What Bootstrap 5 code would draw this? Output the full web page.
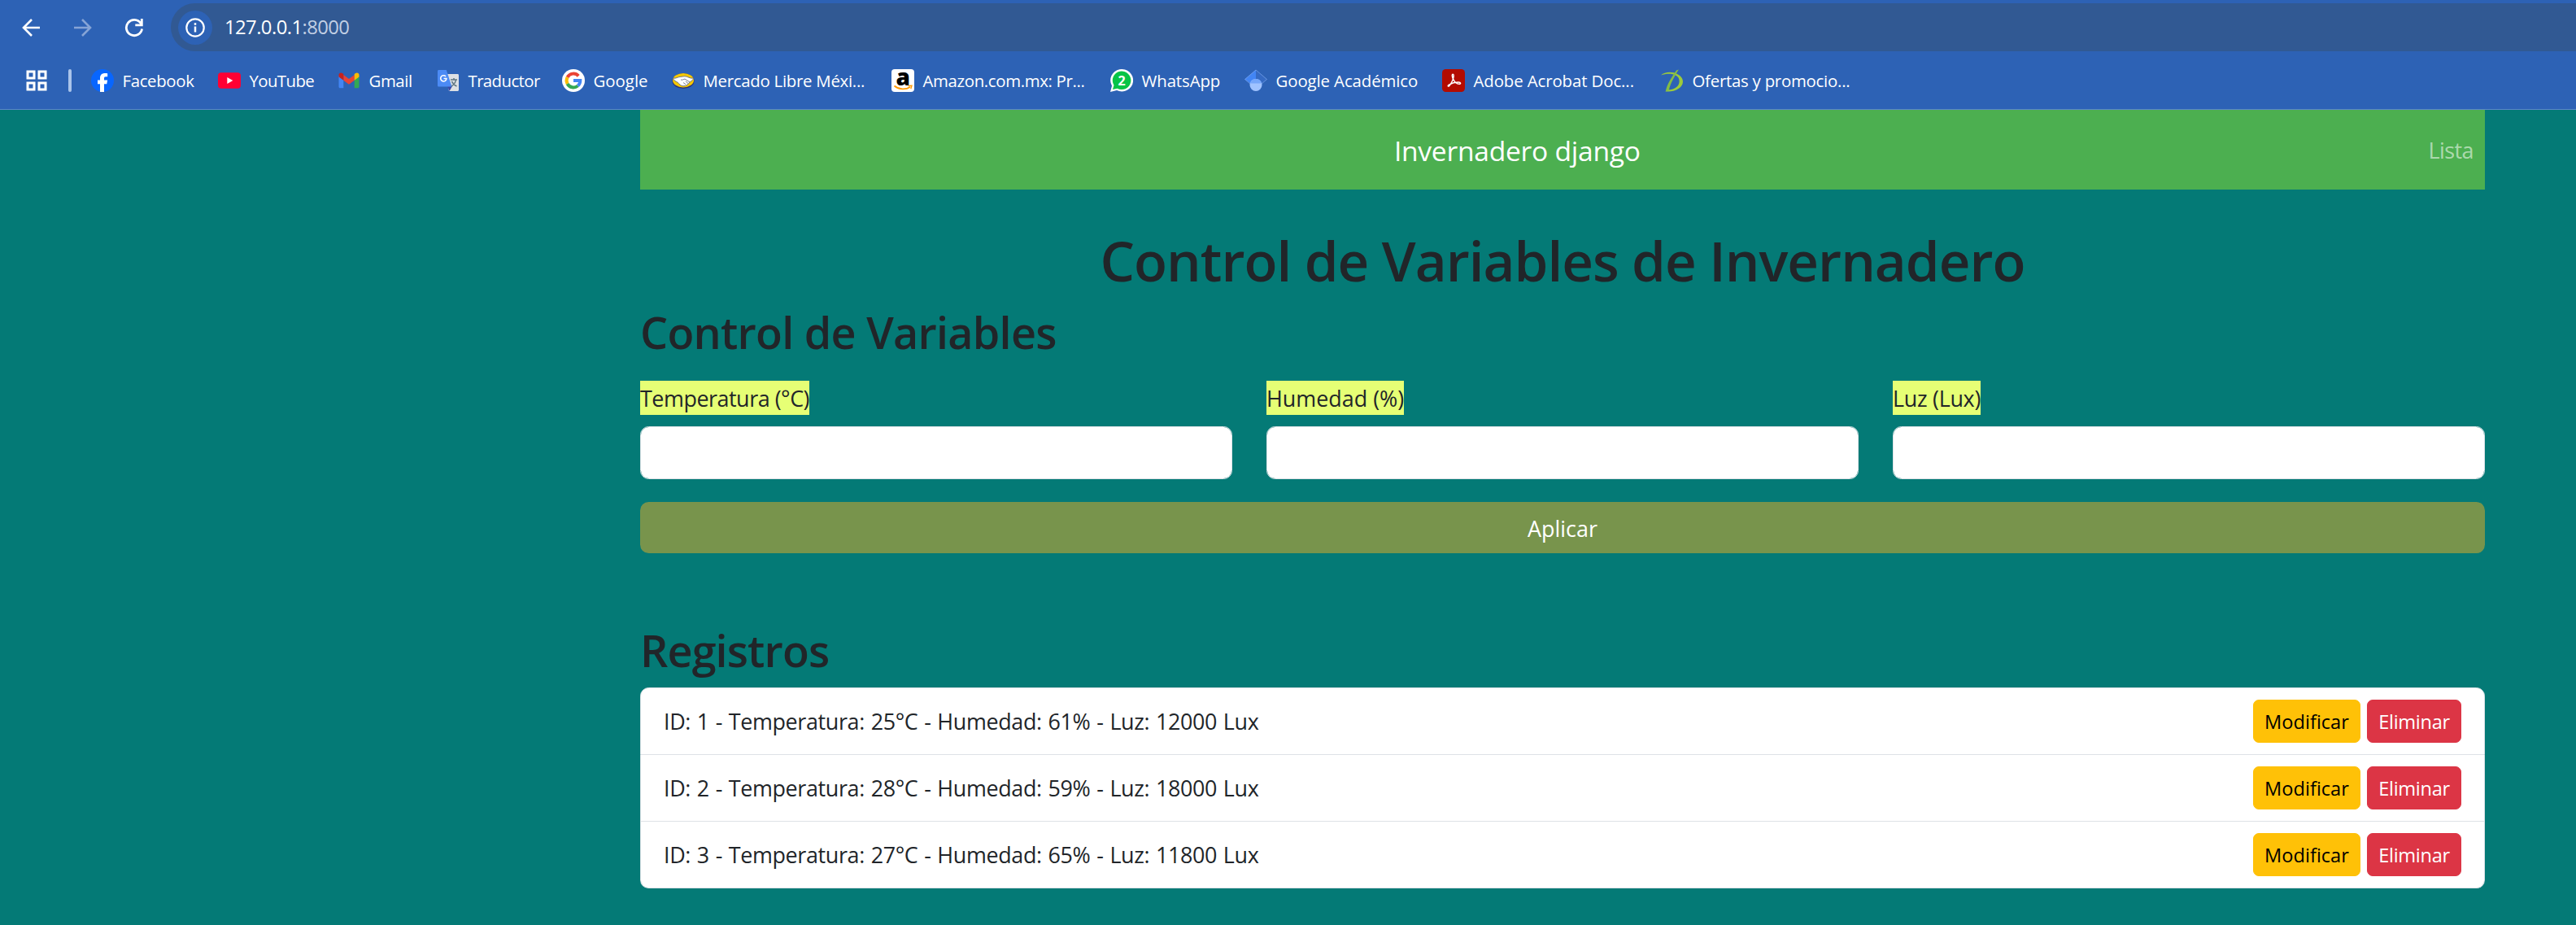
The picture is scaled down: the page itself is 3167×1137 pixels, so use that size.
<!DOCTYPE html>
<html lang="es">
<head>
<meta charset="utf-8">
<title>Invernadero django</title>
<link href="https://cdn.jsdelivr.net/npm/bootstrap@5.3.0/dist/css/bootstrap.min.css" rel="stylesheet">
<style>
html{font-size:28px;overflow:hidden}
body{--bs-body-font-family:"Open Sans","Noto Sans",sans-serif;background:#047a76;height:1137px;overflow:hidden}
.browser-top{height:135px;background:#2d62b5;border-bottom:1px solid #5d86c8;color:#fff}
.tool-row{height:67px;padding:4px 0 4px 26px}
.tool-row>svg{flex:none}
.ic-forward{margin-left:40px}
.ic-reload{margin-left:39px}
.omnibox{height:59px;background:#315993;border-radius:29.5px 0 0 29.5px;margin-left:33px;padding-left:9px;font-size:23.8px;letter-spacing:-.55px}
.site-info{width:42px;height:42px;border-radius:50%;background:#2d62b5;margin-right:15px}
.port{color:#c1cfe4}
.marks-row{height:64px;padding-left:32px;font-size:20.4px}
.divider{width:4px;height:28px;border-radius:2px;background:#aac4ea;margin:0 24px 0 26px}
.bm{flex:none;display:flex;align-items:center;white-space:nowrap}
.bm svg{width:28px;height:28px;flex:none;margin-right:10.5px;overflow:visible}
.w1{width:156px;letter-spacing:-.35px}.w2{width:147px;letter-spacing:-.6px}.w3{width:122px;letter-spacing:-.45px}.w4{width:154px;letter-spacing:-.6px}.w5{width:135px;letter-spacing:0}.w6{width:270px;letter-spacing:-.27px}.w7{width:269px;letter-spacing:-.35px}.w8{width:165px;letter-spacing:-.1px}.w9{width:243px;letter-spacing:-.1px}.w10{width:269px;letter-spacing:-.1px}.w11{letter-spacing:-.25px}
.page{width:2310px;max-width:none;margin-left:766px;padding:0 21px}
.green-nav{background:#4caf50;height:98px;padding:15px 0 13px}
.green-nav .navbar-brand{font-size:33.6px;letter-spacing:-.25px;margin-right:0;padding-right:28px}
.green-nav .nav-link{font-size:26.9px;letter-spacing:-.55px;color:rgba(255,255,255,.55);padding:7px 14px}
h1,h2{font-weight:600!important;color:#212529}
h1{font-size:67.2px!important;height:84px;line-height:78px!important;padding-top:6px;margin:42px 0 14px!important;letter-spacing:-.97px}
h2{font-size:53.8px!important;height:67.2px;line-height:63.2px!important;padding-top:4px;margin:0 0 14px!important;letter-spacing:-.7px}
h2.registros{margin-top:84px!important;letter-spacing:-.85px}
.fields{margin-top:28px;--bs-gutter-x:42px}
.form-label{background:#e6ff75;font-size:26.9px;line-height:40px;padding-top:2px;margin-bottom:14px;vertical-align:top}
.lb-temp{letter-spacing:-.47px}
.lb-luz{letter-spacing:-.28px}
.form-control{height:65px;border-radius:10.5px}
.btn-aplicar{background:#78944c;color:#fff;height:63px;border:0;border-radius:10.5px;font-size:26.9px;padding:11px 21px 9px;margin-top:28px}
.list-group{--bs-list-group-border-radius:10.5px}
.list-group-item{padding:14px 28px;font-size:26.9px;letter-spacing:-.36px;word-spacing:1.2px}
.list-group-item>span{padding-top:1.5px}
.actions{gap:8px;letter-spacing:0}
.btn-sm{font-size:23.6px;line-height:37px;height:53px;padding:8px 13px 6px;border-radius:7px}
.btn-warning{width:132px}
.btn-danger{width:116px;letter-spacing:-.3px}
</style>
<script src="https://cdn.jsdelivr.net/npm/bootstrap@5.3.0/dist/js/bootstrap.bundle.min.js"></script>
</head>
<body>
<header class="browser-top">
  <div class="tool-row d-flex align-items-center">
    <svg width="24" height="24" viewBox="0 0 24 24" fill="none" stroke="#fff" stroke-width="2.6"><path d="M23 12H3M13 2 3 12l10 10"/></svg>
    <svg class="ic-forward" width="24" height="24" viewBox="0 0 24 24" fill="none" stroke="#86a4d6" stroke-width="2.6"><path d="M1 12h20M11 2l10 10-10 10"/></svg>
    <svg class="ic-reload" width="24" height="24" viewBox="0 0 24 24" fill="none" stroke="#fff" stroke-width="2.8"><path d="M21.6 13.5A9.7 9.7 0 1 1 20 6.5L21 8"/><path d="M21.3 1v7.8h-8"/></svg>
    <div class="omnibox d-flex align-items-center flex-grow-1">
      <div class="site-info d-flex align-items-center justify-content-center">
        <svg width="24" height="24" viewBox="0 0 24 24" fill="none" stroke="#fff" stroke-width="2.2"><circle cx="12" cy="12" r="10.7"/><path d="M12 10.5v7" stroke-width="2.5"/><path d="M12 6.2v2.6" stroke-width="2.5"/></svg>
      </div>
      <span>127.0.0.1<span class="port">:8000</span></span>
    </div>
  </div>
  <nav class="marks-row d-flex align-items-center">
    <svg width="26" height="26" viewBox="0 0 26 26" fill="none" stroke="#fff" stroke-width="3"><path d="M2 2h8v8H2zM16 2h8v8h-8zM2 16h8v8H2zM16 16h8v8h-8z"/></svg>
    <div class="divider"></div>
    <div class="bm w1"><svg viewBox="0 0 28 28"><circle cx="14" cy="14" r="14" fill="#0866ff"/><path d="M11 28V18.200H8V13.500h3v-2.200C11 7 13.200 5 17.200 5c1.300 0 2.300.1 3 .3v4h-2.200c-1.600 0-2 .8-2 2.200v2h4.100l-.8 4.700H16V28z" fill="#fff"/></svg><span>Facebook</span></div>
    <div class="bm w2"><svg viewBox="0 0 28 28"><rect y="4.300" width="28" height="19.500" rx="4" fill="#ff0033"/><path d="m11.300 10 7 4-7 4z" fill="#fff"/></svg><span>YouTube</span></div>
    <div class="bm w3"><svg viewBox="0 0 28 28"><path d="M1.500 8v13.500c0 1 .8 1.800 1.800 1.800h4V12z" fill="#4285f4"/><path d="M26.500 8v13.500c0 1-.8 1.800-1.800 1.800h-4V12z" fill="#34a853"/><path d="M7.300 7 14 12l6.700-5v6.700L14 18.800l-6.700-5.100z" fill="#ea4335"/><path d="M1.500 9.500V7.200c0-2.500 2.600-3.500 4.400-2.200L7.300 6v7.700z" fill="#c5221f"/><path d="M26.500 9.500V7.200c0-2.500-2.600-3.500-4.400-2.200L20.700 6v7.700z" fill="#fbbc04"/></svg><span>Gmail</span></div>
    <div class="bm w4"><svg viewBox="0 0 28 28"><path d="M11 6h14.500c1 0 1.500.6 1.500 1.500v18c0 .9-.6 1.500-1.500 1.500H15z" fill="#dde0e4"/><path d="m13 21 6 0-3.500 6z" fill="#3a49a8"/><path d="M2.500 1h9.300l6.700 20.500h-16C1.600 21.500 1 21 1 20V2.500C1 1.600 1.600 1 2.500 1z" fill="#4c8bf5"/><path d="M11 9A3.600 3.600 0 1 0 11.900 11.500H8.500" fill="none" stroke="#fff" stroke-width="1.600"/><path d="M17 13h8M21 11v2M23.500 13c-.5 3.500-3 6.500-5.500 8M18.500 15c1 2.500 3.500 5 6 6" fill="none" stroke="#5f7682" stroke-width="1.500"/></svg><span>Traductor</span></div>
    <div class="bm w5"><svg viewBox="0 0 28 28"><circle cx="14" cy="14" r="14" fill="#fff"/><g fill="none" stroke-width="4"><path d="M20.200 8.300A8.400 8.400 0 0 0 6.600 10" stroke="#ea4335"/><path d="M6.600 10a8.400 8.400 0 0 0 0 8" stroke="#fbbc05"/><path d="M6.600 18a8.400 8.400 0 0 0 12.800 2.500" stroke="#34a853"/><path d="M19.400 20.500A8.400 8.400 0 0 0 22.300 14H14" stroke="#4285f4"/></g></svg><span>Google</span></div>
    <div class="bm w6"><svg viewBox="0 0 28 28"><ellipse cx="14" cy="14.500" rx="13.500" ry="9.500" fill="#2d3277"/><ellipse cx="14" cy="13.700" rx="13" ry="8.700" fill="#f5c800"/><path d="M1.500 11c4 1 6-1.700 9.500-1.700 2 0 3-.5 5-.5 3.500 0 6 3.200 10.500 2.200-.2 2-2 3.500-4 4.500-2 3-5 5.300-8.500 5.300-3 0-5-2.800-7-4.600C4.500 15 1.800 13.500 1.500 11z" fill="#fff" stroke="#555b79" stroke-width=".8"/><path d="M11 13c2 .8 3.500-.8 5-.9l6 3.900M17 15l3 2.500M14 16.500l3 2.200" fill="none" stroke="#555b79" stroke-width=".8"/></svg><span>Mercado Libre Méxi...</span></div>
    <div class="bm w7"><svg viewBox="0 0 28 28"><rect width="28" height="28" rx="4" fill="#fff"/><text x="14" y="19.500" text-anchor="middle" font-family="Open Sans" font-weight="800" font-size="28" fill="#000">a</text><path d="M3.500 20.500c6 5 14 5 19.500 1.500" fill="none" stroke="#f90" stroke-width="1.800"/><path d="m20.500 20.500 4.500-.2-1.200 4" fill="none" stroke="#f90" stroke-width="1.300"/></svg><span>Amazon.com.mx: Pr...</span></div>
    <div class="bm w8"><svg viewBox="0 0 28 28"><path d="M0 28 2 20.500A14 13.700 0 1 1 8 26z" fill="#fff"/><path d="m3 25 1.500-5.200A11.300 11.300 0 1 1 8.600 23.700z" fill="#06c447"/><text x="14" y="19.500" text-anchor="middle" font-family="Open Sans" font-weight="700" font-size="16" fill="#fff">2</text></svg><span>WhatsApp</span></div>
    <div class="bm w9"><svg viewBox="0 0 28 28"><path d="M14 1 .5 12.500 7 17.500 14 14z" fill="#4285f4"/><path d="m14 1 13.500 11.500-6.500 5L14 14z" fill="#356ac3"/><path d="M14 1 .5 12.500 7 18M14 1l13.500 11.500L21 18" fill="none" stroke="#8bb3f6" stroke-width=".6"/><circle cx="14" cy="19.500" r="7.500" fill="#a0c3ff"/><path d="M6.800 17.500a7.500 7.500 0 0 1 14.400 0z" fill="#76a7fa"/></svg><span>Google Académico</span></div>
    <div class="bm w10"><svg viewBox="0 0 28 28"><rect width="28" height="28" rx="4.500" fill="#b30b00"/><path d="M13.300 6.300c-1.600 0-1 3 .2 5.700 1.500 3.500 4.500 6.300 7.500 6.300 2.300 0 2.200-2.200-1-2.200-4 0-8.500 1.300-11.500 3-2.400 1.500-.9 3 .7.900 2.300-3 4.800-8.800 5-11.700 0-1.300-.3-2-.9-2z" fill="none" stroke="#fff" stroke-width="1.500"/></svg><span>Adobe Acrobat Doc...</span></div>
    <div class="bm w11"><svg viewBox="0 0 28 28"><path d="M0 7.500C5 2.500 15 3 20 6c10 5 9 15-1 19.500-4.500 2-9 2-13.500 2l1.200-2C18 26 23.500 20 22.500 13.500 21.500 6 10 4 0 7.500z" fill="#9ccb3b"/><path d="M19 1.500 21.800.5C17 9 12.500 15 9.500 26.500L5.800 27C8 17 14 9 19 1.500z" fill="#84bd45"/></svg><span>Ofertas y promocio...</span></div>
  </nav>
</header>

<main class="container page">
  <nav class="navbar green-nav navbar-dark d-flex flex-nowrap">
    <a class="navbar-brand mx-auto" href="#">Invernadero django</a>
    <a class="nav-link" href="#">Lista</a>
  </nav>
  <h1 class="text-center">Control de Variables de Invernadero</h1>
  <h2>Control de Variables</h2>
  <form>
    <div class="row fields">
      <div class="col-4"><label class="form-label lb-temp" for="temperatura">Temperatura (°C)</label><input class="form-control" id="temperatura"></div>
      <div class="col-4"><label class="form-label" for="humedad">Humedad (%)</label><input class="form-control" id="humedad"></div>
      <div class="col-4"><label class="form-label lb-luz" for="luz">Luz (Lux)</label><input class="form-control" id="luz"></div>
    </div>
    <button class="btn btn-aplicar w-100" type="button">Aplicar</button>
  </form>
  <h2 class="registros">Registros</h2>
  <ul class="list-group">
    <li class="list-group-item d-flex justify-content-between align-items-center"><span>ID: 1 - Temperatura: 25°C - Humedad: 61% - Luz: 12000 Lux</span><div class="actions d-flex"><button class="btn btn-warning btn-sm">Modificar</button><button class="btn btn-danger btn-sm">Eliminar</button></div></li>
    <li class="list-group-item d-flex justify-content-between align-items-center"><span>ID: 2 - Temperatura: 28°C - Humedad: 59% - Luz: 18000 Lux</span><div class="actions d-flex"><button class="btn btn-warning btn-sm">Modificar</button><button class="btn btn-danger btn-sm">Eliminar</button></div></li>
    <li class="list-group-item d-flex justify-content-between align-items-center"><span>ID: 3 - Temperatura: 27°C - Humedad: 65% - Luz: 11800 Lux</span><div class="actions d-flex"><button class="btn btn-warning btn-sm">Modificar</button><button class="btn btn-danger btn-sm">Eliminar</button></div></li>
  </ul>
</main>
</body>
</html>
